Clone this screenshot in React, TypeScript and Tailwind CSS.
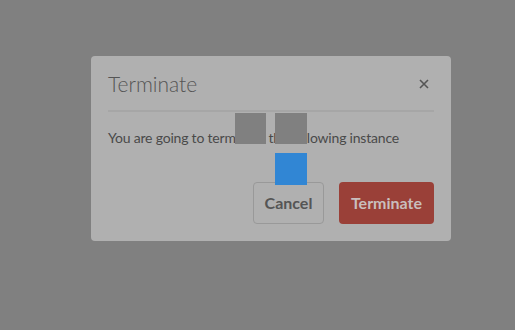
export default function App() {
  return (
    <div className="relative h-[330px] w-[515px] overflow-hidden bg-[#808080] font-['Lato',sans-serif]">
      <div className="absolute left-[91px] top-[56px] flex h-[185px] w-[360px] flex-col rounded-[4px] bg-[#b0b0b0] px-[17px] pb-[17px]">
        <div className="flex h-[56px] items-end justify-between border-b-2 border-[#a6a6a6] pb-[12px]">
          <div className="text-[21px] font-light leading-[28px] text-[#555]">Terminate</div>
          <svg width="10" height="10" viewBox="0 0 10 10" className="mb-[9px] mr-[5px]">
            <path d="M1 1L9 9M9 1L1 9" stroke="#555" strokeWidth="1.6" />
          </svg>
        </div>
        <p className="mt-[16px] text-[14px] leading-[20px] tracking-[-0.2px] text-[#4a4a4a]">
          You are going to terminate the following instance
        </p>
        <div className="mt-auto flex justify-end gap-[15px]">
          <button className="h-[42px] w-[71px] rounded-[4px] border border-[#999] text-[16px] font-bold text-[#555]">
            Cancel
          </button>
          <button className="h-[42px] w-[95px] rounded-[4px] bg-[#9a4038] text-[16px] font-bold text-[#c9bebd]">
            Terminate
          </button>
        </div>
      </div>
      <div className="absolute left-[235px] top-[113px] h-[31px] w-[31px] bg-[#808080]" />
      <div className="absolute left-[275px] top-[113px] h-[31px] w-[32px] bg-[#808080]" />
      <div className="absolute left-[275px] top-[153px] h-[32px] w-[32px] bg-[#3186d4]" />
    </div>
  );
}
